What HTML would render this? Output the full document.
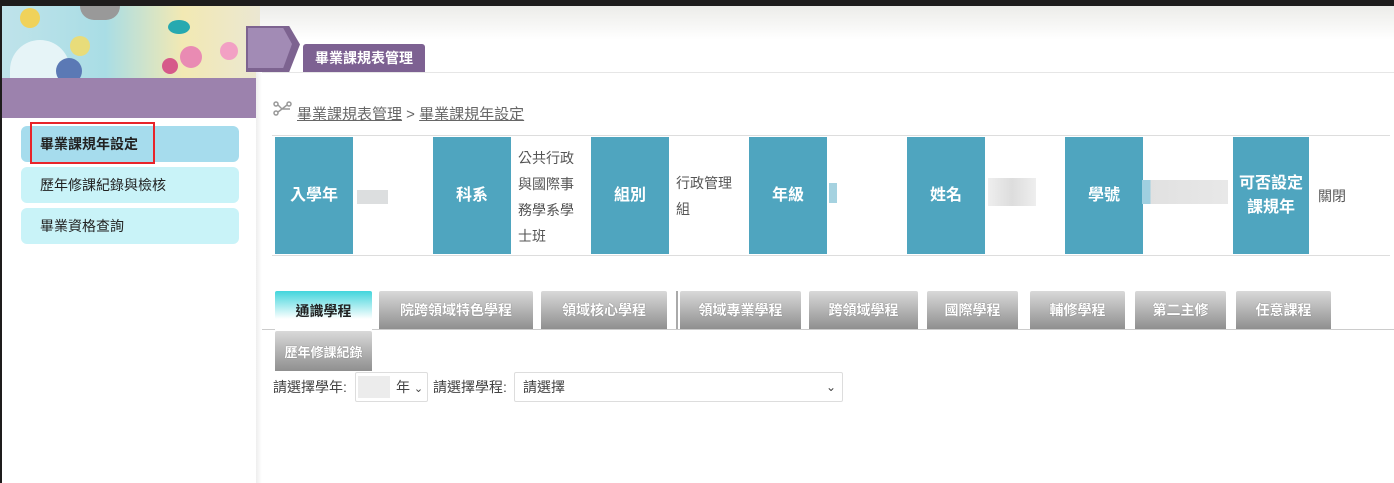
<!DOCTYPE html>
<html><head><meta charset="utf-8">
<style>
*{margin:0;padding:0;box-sizing:border-box}
body{width:1394px;height:483px;overflow:hidden;background:#fff;position:relative;font-family:"Liberation Sans","Noto Sans CJK TC",sans-serif;color:#333}
.a{position:absolute}
.hd{background:#4fa5bf;color:#fff;font-weight:bold;font-size:16px;display:flex;align-items:center;justify-content:center;text-align:center;line-height:24px;width:78px;top:137px;height:117px}
.v{font-size:14px;color:#555;line-height:26px}
.tab{top:291px;height:38px;background:linear-gradient(#d9d9d9,#8f8f8f);color:#fff;font-weight:bold;font-size:14px;display:flex;align-items:center;justify-content:center;border-radius:2px 2px 0 0;text-shadow:0 0 1px #666}
.menu{left:21px;width:218px;height:36px;border-radius:6px;background:#c9f3f8;font-size:14px;padding-left:19px;line-height:36px;color:#222}
.blur{background:#dcdedf}
</style></head><body>
<div class="a" style="left:260px;top:6px;width:1134px;height:34px;background:linear-gradient(#ecece9,#fff)"></div>
<div class="a" style="left:0;top:0;width:1394px;height:6px;background:#1e1c1c"></div>
<div class="a" style="left:0;top:0;width:2px;height:483px;background:#1e1c1c"></div>
<!-- header image -->
<div class="a" style="left:2px;top:6px;width:258px;height:72px;background:linear-gradient(90deg,#bfe3ea,#a9dde5 40%,#f2e9b3 70%,#ebe7d2)"></div>
<div class="a" style="left:10px;top:40px;width:60px;height:38px;border-radius:30px 30px 0 0;background:#e6f4f7"></div>
<div class="a" style="left:56px;top:58px;width:26px;height:26px;border-radius:50%;background:#5b79b5"></div>
<div class="a" style="left:70px;top:36px;width:20px;height:20px;border-radius:50%;background:#e8dc7a"></div>
<div class="a" style="left:20px;top:8px;width:20px;height:20px;border-radius:50%;background:#f0d25a"></div>
<div class="a" style="left:180px;top:46px;width:22px;height:22px;border-radius:50%;background:#e98bb3"></div>
<div class="a" style="left:162px;top:58px;width:16px;height:16px;border-radius:50%;background:#d65a8a"></div>
<div class="a" style="left:220px;top:42px;width:18px;height:18px;border-radius:50%;background:#f2a0c4"></div>
<div class="a" style="left:168px;top:20px;width:22px;height:14px;border-radius:50%;background:#27a9b0"></div>
<div class="a" style="left:80px;top:6px;width:40px;height:14px;border-radius:0 0 20px 20px;background:#999"></div>
<div class="a" style="left:2px;top:78px;width:258px;height:40px;background:#9c82ad"></div>
<div class="a" style="left:256px;top:70px;width:6px;height:413px;background:linear-gradient(90deg,#eee,#fff)"></div>
<div class="a" style="left:246px;top:26px;width:54px;height:46px;background:#7d6390;clip-path:polygon(0 0,80% 0,100% 40%,80% 100%,0 100%)"></div>
<div class="a" style="left:248px;top:28px;width:44px;height:40px;background:#a28bb5;clip-path:polygon(0 0,80% 0,100% 40%,80% 100%,0 100%)"></div>
<div class="a" style="left:303px;top:44px;width:122px;height:28px;background:#7d6192;color:#fff;font-weight:bold;font-size:14px;text-align:center;line-height:28px;border-radius:3px 3px 0 0">畢業課規表管理</div>
<div class="a" style="left:262px;top:72px;width:1132px;height:1px;background:#e6e6e6"></div>
<!-- menu -->
<div class="a menu" style="top:126px;background:#a6dced;font-weight:bold">畢業課規年設定</div>
<div class="a" style="left:30px;top:122px;width:125px;height:42px;border:2px solid #e8242a"></div>
<div class="a menu" style="top:167px">歷年修課紀錄與檢核</div>
<div class="a menu" style="top:208px">畢業資格查詢</div>
<!-- breadcrumb -->
<svg class="a" style="left:273px;top:101px" width="20" height="16" viewBox="0 0 20 16"><g fill="none" stroke="#999" stroke-width="1.5"><circle cx="3" cy="3" r="2"/><circle cx="3" cy="12" r="2"/><circle cx="16" cy="3" r="2"/><path d="M5 4l4 4M5 11l4-3M9 8l5-4M9 8h8"/></g></svg>
<div class="a" style="left:297px;top:103px;font-size:15px;color:#666"><u>畢業課規表管理</u> &gt; <u>畢業課規年設定</u></div>
<div class="a" style="left:272px;top:135px;width:1118px;height:1px;background:#ddd"></div>
<div class="a" style="left:272px;top:255px;width:1118px;height:1px;background:#ddd"></div>
<div class="a hd" style="left:275px">入學年</div>
<div class="a blur" style="left:357px;top:190px;width:31px;height:14px"></div>
<div class="a hd" style="left:433px">科系</div>
<div class="a v" style="left:518px;top:145px;width:64px">公共行政與國際事務學系學士班</div>
<div class="a hd" style="left:591px">組別</div>
<div class="a v" style="left:676px;top:170px;width:64px">行政管理組</div>
<div class="a hd" style="left:749px">年級</div>
<div class="a" style="left:829px;top:183px;width:8px;height:20px;background:#a5d2e0"></div>
<div class="a hd" style="left:907px">姓名</div>
<div class="a blur" style="left:988px;top:178px;width:48px;height:28px;background:linear-gradient(90deg,#eee,#ddd,#eee)"></div>
<div class="a hd" style="left:1065px">學號</div>
<div class="a blur" style="left:1142px;top:180px;width:86px;height:24px;background:linear-gradient(90deg,#a0cfe0 10%,#e1e1e1 10%,#e8e8e8)"></div>
<div class="a hd" style="left:1233px;width:76px">可否設定<br>課規年</div>
<div class="a v" style="left:1318px;top:183px">關閉</div>
<!-- tabs -->
<div class="a" style="left:262px;top:329px;width:1132px;height:1px;background:#ccc"></div>
<div class="a tab" style="left:275px;width:97px;background:linear-gradient(#42d5dc,#fff 70%);color:#222;text-shadow:none;height:40px">通識學程</div>
<div class="a tab" style="left:379px;width:154px">院跨領域特色學程</div>
<div class="a tab" style="left:541px;width:126px">領域核心學程</div>
<div class="a" style="left:676px;top:291px;width:2px;height:38px;background:#aaa"></div>
<div class="a tab" style="left:680px;width:121px">領域專業學程</div>
<div class="a tab" style="left:809px;width:109px">跨領域學程</div>
<div class="a tab" style="left:927px;width:91px">國際學程</div>
<div class="a tab" style="left:1030px;width:95px">輔修學程</div>
<div class="a tab" style="left:1135px;width:91px">第二主修</div>
<div class="a tab" style="left:1236px;width:95px">任意課程</div>
<div class="a tab" style="left:275px;top:331px;width:97px;height:40px;font-size:13px">歷年修課紀錄</div>
<!-- selects -->
<div class="a" style="left:273px;top:377px;font-size:14px;color:#444">請選擇學年:</div>
<div class="a" style="left:355px;top:372px;width:73px;height:30px;border:1px solid #ddd;border-radius:2px;font-size:14px;line-height:28px;padding-left:40px;color:#444">年 <span style="font-size:11px">⌄</span></div>
<div class="a" style="left:358px;top:376px;width:32px;height:22px;background:#ececec"></div>
<div class="a" style="left:433px;top:377px;font-size:14px;color:#444">請選擇學程:</div>
<div class="a" style="left:514px;top:372px;width:329px;height:30px;border:1px solid #ddd;border-radius:2px;font-size:14px;line-height:28px;padding-left:8px;color:#444">請選擇<span style="position:absolute;right:6px;font-size:12px">⌄</span></div>
</body></html>
